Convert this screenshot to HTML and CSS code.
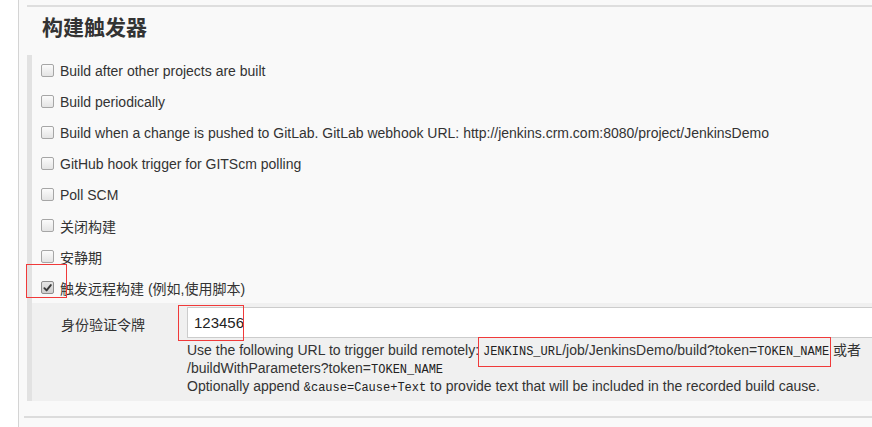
FILE: index.html
```html
<!DOCTYPE html>
<html lang="zh">
<head>
<meta charset="utf-8">
<title>构建触发器</title>
<link rel="stylesheet" href="styles.css">
</head>
<body>
<div class="page">
  <div class="side"></div>
  <main class="main">
    <section class="section">
      <h2 class="section-title">构建触发器</h2>
      <div class="options">
        <div class="opt"><span class="cb"></span><span class="opt-label">Build after other projects are built</span></div>
        <div class="opt"><span class="cb"></span><span class="opt-label">Build periodically</span></div>
        <div class="opt"><span class="cb"></span><span class="opt-label">Build when a change is pushed to GitLab. GitLab webhook URL: http://jenkins.crm.com:8080/project/JenkinsDemo</span></div>
        <div class="opt"><span class="cb"></span><span class="opt-label">GitHub hook trigger for GITScm polling</span></div>
        <div class="opt"><span class="cb"></span><span class="opt-label">Poll SCM</span></div>
        <div class="opt"><span class="cb"></span><span class="opt-label">关闭构建</span></div>
        <div class="opt"><span class="cb"></span><span class="opt-label">安静期</span></div>
        <div class="opt"><span class="cb cb-checked"><svg viewBox="0 0 12 12" width="12" height="12"><path d="M2.6 6.2 L5 8.6 L9.6 2.8" fill="none" stroke="#3a3a3a" stroke-width="2.1" stroke-linecap="round" stroke-linejoin="round"/></svg></span><span class="opt-label">触发远程构建 (例如,使用脚本)</span></div>
        <div class="nested">
          <div class="setting-name">身份验证令牌</div>
          <div class="setting-main">
            <div class="token-input">123456</div>
            <div class="help">Use the following URL to trigger build remotely: <code>JENKINS_URL</code>/job/JenkinsDemo/build?token=<code>TOKEN_NAME</code> 或者 /buildWithParameters?token=<code>TOKEN_NAME</code><br>Optionally append <code>&amp;cause=Cause+Text</code> to provide text that will be included in the recorded build cause.</div>
          </div>
        </div>
      </div>
    </section>
    <div class="section-end"></div>
  </main>
  <div class="mark mark-check"></div>
  <div class="mark mark-token"></div>
  <div class="mark mark-url"></div>
</div>
</body>
</html>
```
FILE: styles.css
```css
html, body {
  margin: 0;
  padding: 0;
  height: 100%;
  overflow: hidden;
  background: #ffffff;
}
body {
  font-family: "Liberation Sans", Arial, "Noto Sans CJK SC", sans-serif;
  font-size: 14px;
  color: #333333;
}
.page {
  position: relative;
  display: flex;
  min-height: 427px;
}
.side {
  width: 18px;
  flex: none;
  border-right: 1px solid #d4d4d4;
  background: #ffffff;
}
.main {
  flex: 1;
  min-width: 0;
  background: #f9f9f9;
  padding-left: 8px;
  padding-top: 5px;
}
.section {
  border-top: 2px solid #dedede;
}
.section-title {
  margin: 0;
  height: 48px;
  padding-left: 15px;
  font-family: "Noto Sans CJK SC", "Liberation Sans", sans-serif;
  font-size: 21px;
  font-weight: 700;
  line-height: 38px;
  color: #333333;
}
.options {
  border-left: 5px solid #e2e2e2;
}
.opt {
  height: 31px;
  display: flex;
  align-items: center;
  padding-left: 9px;
}
.cb {
  width: 11px;
  height: 11px;
  flex: none;
  border: 1px solid #a6a6a6;
  border-radius: 2px;
  background: linear-gradient(#fbfbfb, #e4e4e4);
  margin-right: 6px;
  display: flex;
  align-items: center;
  justify-content: center;
}
.cb-checked {
  background: linear-gradient(#e6e6e6, #cfcfcf);
  border-color: #8e8e8e;
}
.cb svg {
  display: block;
}
.opt-label {
  white-space: nowrap;
  font-family: "Liberation Sans", Arial, "Noto Sans CJK SC", sans-serif;
}
.nested {
  background: #f0f0f0;
  display: grid;
  grid-template-columns: 155px 720px;
  padding: 4px 0 6px;
}
.setting-name {
  padding-left: 29px;
  padding-top: 8px;
  font-family: "Noto Sans CJK SC", sans-serif;
  font-size: 14px;
  line-height: 18px;
}
.token-input {
  height: 29px;
  border: 1px solid #cccccc;
  background: #ffffff;
  font-size: 15px;
  line-height: 29px;
  padding-left: 6px;
  color: #222222;
}
.help {
  margin-top: 3px;
  line-height: 18px;
  font-size: 14px;
  width: 690px;
  color: #333333;
}
.help code {
  font-family: "Liberation Mono", "Courier New", monospace;
  font-size: 12px;
  line-height: 1;
  color: #222222;
}
.section-end {
  margin-top: 15px;
  margin-left: -3px;
  border-top: 2px solid #dcdcdc;
}
.mark {
  position: absolute;
  border: 1px solid #f03a3a;
  pointer-events: none;
}
.mark-check {
  left: 26px;
  top: 264px;
  width: 39px;
  height: 32px;
}
.mark-token {
  left: 178px;
  top: 305px;
  width: 64px;
  height: 34px;
}
.mark-url {
  left: 478px;
  top: 337px;
  width: 351px;
  height: 28px;
}
```
